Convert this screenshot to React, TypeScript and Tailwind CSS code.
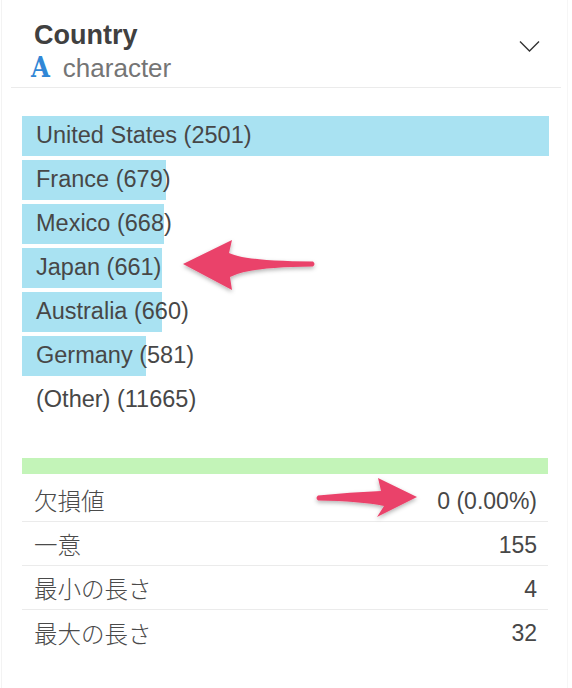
import React from "react";

const bars = [
  { label: "United States (2501)", w: 527 },
  { label: "France (679)", w: 144 },
  { label: "Mexico (668)", w: 142 },
  { label: "Japan (661)", w: 140 },
  { label: "Australia (660)", w: 140 },
  { label: "Germany (581)", w: 124 },
  { label: "(Other) (11665)", w: 0 },
];

const stats = [
  { k: "欠損値", v: "0 (0.00%)" },
  { k: "一意", v: "155" },
  { k: "最小の長さ", v: "4" },
  { k: "最大の長さ", v: "32" },
];

export default function App() {
  return (
    <div
      className="relative w-[572px] h-[688px] bg-white overflow-hidden"
      style={{ fontFamily: '"Liberation Sans", "Noto Sans CJK JP", sans-serif' }}
    >
      <div className="absolute inset-y-0 left-[1px] w-px bg-[#f3f3f3]" />
      <div className="absolute inset-y-0 right-[4px] w-px bg-[#f6f6f6]" />

      {/* header */}
      <div className="mx-[11px] pl-[20px] pt-[22px] pb-[7px] border-b border-[#ebebeb] flex items-start justify-between">
        <div className="flex flex-col">
          <div className="text-[27px] leading-[27px] font-bold text-[#404040] pl-[3px]">Country</div>
          <div className="flex items-center mt-[7px] h-[24px]">
            <span
              className="text-[27px] leading-[24px] font-bold text-[#3187d6] mr-[13px]"
              style={{ fontFamily: '"DejaVu Serif Condensed", "DejaVu Serif", serif' }}
            >
              A
            </span>
            <span className="text-[26px] leading-[24px] text-[#757575]">character</span>
          </div>
        </div>
        <svg width="22" height="14" viewBox="0 0 22 14" className="mt-[18px] mr-[20px]">
          <polyline points="1,1.5 10.5,11 20,1.5" fill="none" stroke="#333" strokeWidth="1.4" />
        </svg>
      </div>

      {/* bars */}
      <div className="mt-[28px] ml-[22px] mr-[23px] flex flex-col gap-[4px]">
        {bars.map((b) => (
          <div key={b.label} className="relative h-[40px] flex items-center">
            {b.w > 0 && (
              <div className="absolute left-0 top-0 h-[40px] bg-[#a9e2f2]" style={{ width: b.w }} />
            )}
            <span className="relative pl-[14px] text-[23.5px] text-[#474747] whitespace-nowrap">{b.label}</span>
          </div>
        ))}
      </div>

      {/* stats */}
      <div className="mt-[38px] ml-[22px] mr-[24px]">
        <div className="h-[16px] bg-[#c3f4b8]" />
        <div className="pt-[4px]">
          {stats.map((s, i) => (
            <div
              key={s.k}
              className={`h-[44px] flex items-center justify-between pl-[12px] pr-[11px] pt-[3px] ${
                i < stats.length - 1 ? "border-b border-[#ebebeb]" : ""
              }`}
            >
              <span
                className="text-[23.5px] font-light text-[#4a4a4a]"
                style={{ fontFamily: '"Noto Sans CJK JP", sans-serif' }}
              >
                {s.k}
              </span>
              <span className="text-[23px] text-[#474747]">{s.v}</span>
            </div>
          ))}
        </div>
      </div>

      {/* arrows */}
      <svg className="absolute left-0 top-0 pointer-events-none" width="572" height="688">
        <defs>
          <filter id="sh" x="-20%" y="-40%" width="140%" height="180%">
            <feDropShadow dx="0" dy="2" stdDeviation="2" floodColor="#000" floodOpacity="0.3" />
          </filter>
        </defs>
        <path
          d="M183,264 L232,240 L229,253 Q245,261 313,261.5 Q316,264 313,266.5 Q248,267 230,277 L232,290 Z"
          fill="#ea436b"
          filter="url(#sh)"
        />
        <path
          d="M417,497 L378,478 L381,491 Q350,492 318,495.5 Q315,498 318,500.5 Q360,501 384,506 L377,517 Z"
          fill="#ea436b"
          filter="url(#sh)"
        />
      </svg>
    </div>
  );
}
